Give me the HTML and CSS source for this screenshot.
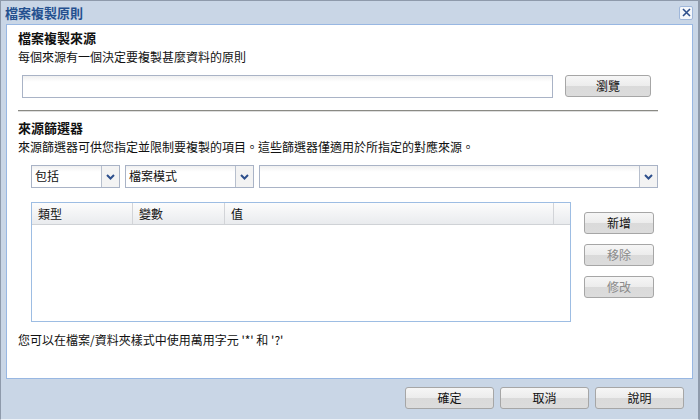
FILE: index.html
```html
<!DOCTYPE html>
<html>
<head>
    <title>檔案複製原則</title>
    <link rel="stylesheet" href="styles.css">
</head>
<body>
    <div class="dialog">
        <!-- Title bar -->
        <div class="titlebar">
            <span class="title">檔案複製原則</span>
            <span class="close">
                <svg width="11" height="11" viewBox="0 0 11 11"><path d="M2 2 L9 9 M9 2 L2 9" stroke="#2d4f8c" stroke-width="1.6" fill="none"/></svg>
            </span>
        </div>

        <div class="panel">
            <!-- Source -->
            <h2>檔案複製來源</h2>
            <p class="desc">每個來源有一個決定要複製甚麼資料的原則</p>
            <div class="source-row">
                <input class="field source-input" type="text">
                <button class="btn browse">瀏覽</button>
            </div>

            <div class="separator"></div>

            <!-- Filters -->
            <h2 class="filter-title">來源篩選器</h2>
            <p class="desc">來源篩選器可供您指定並限制要複製的項目。這些篩選器僅適用於所指定的對應來源。</p>
            <div class="filter-row">
                <div class="combo combo-type"><span class="combo-text">包括</span><span class="combo-arrow"><svg width="9" height="6" viewBox="0 0 9 6"><path d="M1 1 L4.5 4.5 L8 1" stroke="#2d4f8c" stroke-width="2" fill="none"/></svg></span></div>
                <div class="combo combo-mode"><span class="combo-text">檔案模式</span><span class="combo-arrow"><svg width="9" height="6" viewBox="0 0 9 6"><path d="M1 1 L4.5 4.5 L8 1" stroke="#2d4f8c" stroke-width="2" fill="none"/></svg></span></div>
                <div class="combo combo-value"><span class="combo-text"></span><span class="combo-arrow"><svg width="9" height="6" viewBox="0 0 9 6"><path d="M1 1 L4.5 4.5 L8 1" stroke="#2d4f8c" stroke-width="2" fill="none"/></svg></span></div>
            </div>

            <div class="table-row">
                <div class="grid">
                    <div class="grid-head">
                        <div class="col col-type">類型</div>
                        <div class="col col-var">變數</div>
                        <div class="col col-val">值</div>
                        <div class="col col-end"></div>
                    </div>
                </div>
                <div class="side-buttons">
                    <button class="btn side">新增</button>
                    <button class="btn side" disabled>移除</button>
                    <button class="btn side" disabled>修改</button>
                </div>
            </div>

            <p class="note">您可以在檔案/資料夾樣式中使用萬用字元 '*' 和 '?'</p>
        </div>

        <!-- Footer buttons -->
        <div class="footer">
            <button class="btn footer-btn">確定</button>
            <button class="btn footer-btn">取消</button>
            <button class="btn footer-btn">說明</button>
        </div>
    </div>
</body>
</html>
```

FILE: styles.css
```css
body { margin: 0; font-family: "Noto Sans CJK TC", "Liberation Sans", sans-serif; font-size: 12px; color: #111; }

.dialog {
    width: 700px;
    height: 420px;
    box-sizing: border-box;
    background-color: #c9d6e6;
    border: 1px solid #8e9aab;
    border-right-width: 2px;
    border-bottom-color: #eef2f7;
    display: flex;
    flex-direction: column;
}

.titlebar {
    height: 23px;
    display: flex;
    align-items: center;
    justify-content: space-between;
    padding: 0 5px 0 4px;
}
.title { color: #24508f; font-size: 13px; font-weight: bold; line-height: 16px; }
.close {
    width: 12px;
    height: 12px;
    border: 1px solid #9fb7da;
    border-radius: 2px;
    background-color: #f4f7fb;
    display: flex;
    align-items: center;
    justify-content: center;
}

.panel {
    box-sizing: border-box;
    margin: 0 5px 0 5px;
    height: 355px;
    background-color: #fff;
    border: 1px solid #98b7e2;
    padding: 5px 0 0 11px;
}

h2 { margin: 0; font-size: 13px; font-weight: bold; line-height: 16px; }
.desc { margin: 3px 0 0; line-height: 16px; }

.source-row { display: flex; gap: 12px; margin: 10px 0 0 4px; }
.field {
    box-sizing: border-box;
    height: 23px;
    border: 1px solid #a9b3c6;
    background: linear-gradient(#f0f0f0, #fff 6px);
    padding: 0 4px;
    font: inherit;
}
.source-input { width: 531px; }

.btn {
    box-sizing: border-box;
    height: 22px;
    border: 1px solid #a6a6a6;
    border-radius: 3px;
    background: linear-gradient(#f6f6f6 0, #ececec 50%, #dadada 50%, #dcdcdc 100%);
    font-family: "Noto Sans CJK TC", sans-serif;
    font-size: 12px;
    color: #111;
    padding: 0;
    line-height: 18px;
}
.btn:disabled { color: #8a8a8a; }
.browse { width: 86px; }

.separator { width: 640px; height: 1px; background-color: #8a8a84; border-bottom: 1px solid #dedede; margin-top: 12px; }
.filter-title { margin-top: 8px; }

.filter-row { display: flex; gap: 5px; margin: 10px 0 0 13px; }
.combo {
    box-sizing: border-box;
    height: 23px;
    border: 1px solid #a9b3c6;
    background: linear-gradient(#f0f0f0, #fff 6px);
    display: flex;
}
.combo-text { flex: 1; padding: 1px 0 0 3px; line-height: 18px; }
.combo-arrow {
    width: 17px;
    border-left: 1px solid #b7bfcd;
    background-color: #f3f3f3;
    display: flex;
    align-items: center;
    justify-content: center;
}
.combo-type { width: 89px; }
.combo-mode { width: 129px; }
.combo-value { width: 399px; }

.table-row { display: flex; gap: 13px; margin: 14px 0 0 13px; }
.grid {
    box-sizing: border-box;
    width: 540px;
    height: 120px;
    border: 1px solid #9dbde3;
    background-color: #fff;
}
.grid-head {
    display: flex;
    height: 21px;
    background: linear-gradient(#fcfcfc, #e9ebee);
    border-bottom: 1px solid #cfd2d6;
}
.col { box-sizing: border-box; line-height: 21px; padding-left: 6px; border-right: 1px solid #d2d4d8; }
.col-type { width: 101px; }
.col-var { width: 92px; }
.col-val { width: 329px; }
.col-end { flex: 1; border-right: none; }

.side-buttons { display: flex; flex-direction: column; gap: 10px; padding-top: 10px; }
.side { width: 70px; }

.note { margin: 10px 0 0; line-height: 16px; }

.footer { display: flex; justify-content: flex-end; gap: 6px; padding: 8px 14px 0 0; }
.footer-btn { width: 89px; }
```
